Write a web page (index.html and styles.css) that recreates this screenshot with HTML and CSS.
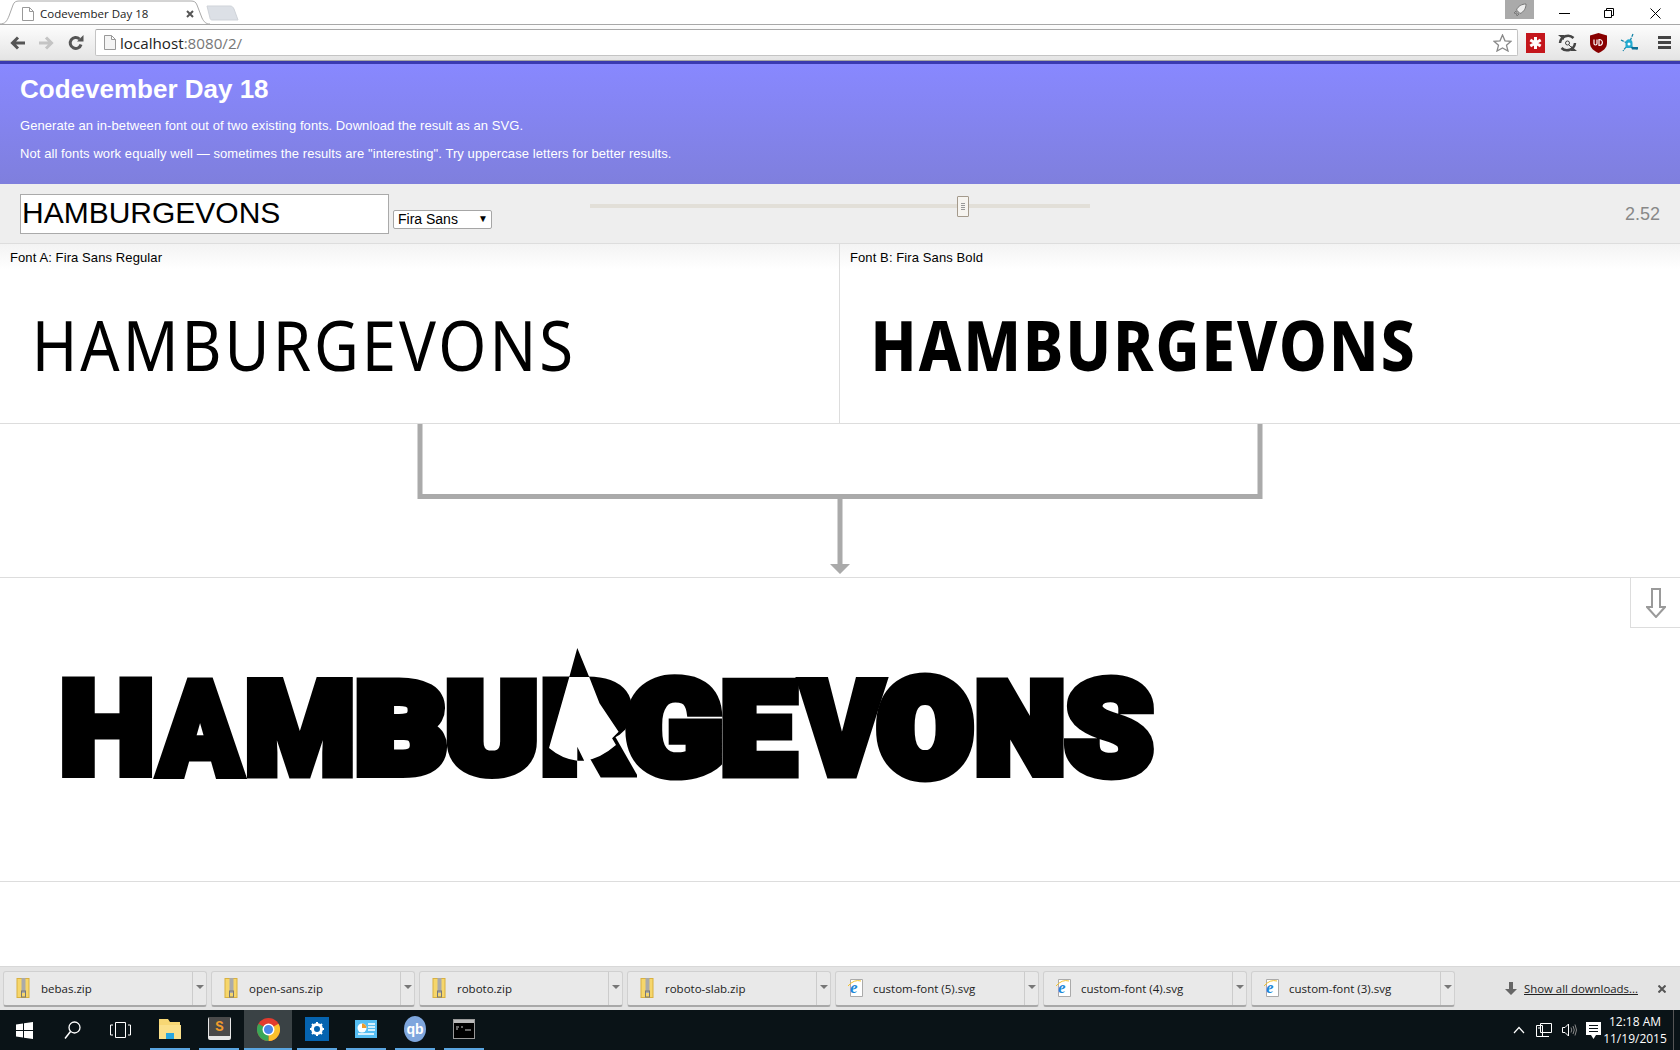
FILE: index.html
```html
<!DOCTYPE html>
<html lang="en">
<head>
<meta charset="utf-8">
<title>Codevember Day 18</title>
<link rel="stylesheet" href="styles.css">
</head>
<body>
<div class="tabstrip">
  <div class="tab">
    <svg class="tab-shape" width="210" height="25" viewBox="0 0 210 25"><path d="M0 24C5 24 7 21 9 16L13 5C14 2 16 1 19 1H191C194 1 196 2 197 5L202 18C204 22 206 24 210 24" fill="#fff" stroke="#a8a8a8"/></svg>
    <svg class="tab-fav" width="12" height="14" viewBox="0 0 12 14"><path d="M.5.5H7.500L11.500 4.500V13.500H.5ZM7.500.5V4.500H11.500" fill="#fff" stroke="#999"/></svg>
    <span class="tab-title">Codevember Day 18</span>
    <svg class="tab-close" width="8" height="8" viewBox="0 0 8 8"><path d="M1 1L7 7M7 1L1 7" stroke="#555" stroke-width="2"/></svg>
  </div>
  <svg class="newtab" width="33" height="16" viewBox="0 0 33 16"><path d="M1 1H24C26 1 27 2 28 4L32 15H6C5 15 4 14 4 13Z" fill="#dce0e6" stroke="#cfd3d9"/></svg>
  <div class="winbtns">
    <span class="profile"><svg width="14" height="14" viewBox="0 0 14 14"><path d="M13 1C9 1 5 3 3.500 7L7 10.500C11 9 13 5 13 1ZM3 8L1 10 3 10.500ZM6 11L4 13 3.500 11Z" fill="#eee" stroke="#777"/></svg></span>
    <svg class="win-min" width="11" height="2" viewBox="0 0 11 2"><rect width="11" height="1" fill="#000"/></svg>
    <svg class="win-max" width="10" height="10" viewBox="0 0 10 10"><path d="M.5 2.500H7.500V9.500H.5ZM2.500 2.500V.5H9.500V7.500H7.500" fill="none" stroke="#000"/></svg>
    <svg class="win-close" width="11" height="11" viewBox="0 0 11 11"><path d="M.5.5L10.500 10.500M10.500.5L.5 10.500" stroke="#000"/></svg>
  </div>
</div>
<div class="toolbar">
  <svg class="nav" width="15" height="14" viewBox="0 0 15 14"><path d="M15 7H3M8 1.500L2.500 7 8 12.500" fill="none" stroke="#555" stroke-width="3"/></svg>
  <svg class="nav" width="15" height="14" viewBox="0 0 15 14"><path d="M0 7H12M7 1.500L12.500 7 7 12.500" fill="none" stroke="#c4c4c4" stroke-width="3"/></svg>
  <svg class="nav" width="16" height="16" viewBox="0 0 16 16"><path d="M13 9.500A5.500 5.500 0 1 1 11.500 4" fill="none" stroke="#555" stroke-width="3"/><path d="M9 6.500H15.500V0Z" fill="#555"/></svg>
  <div class="omnibox">
    <svg class="omni-page" width="12" height="15" viewBox="0 0 12 15"><path d="M.5.5H7.500L11.500 4.500V14.500H.5ZM7.500.5V4.500H11.500" fill="#f4f4f4" stroke="#999"/></svg>
    <span class="url-host">localhost</span><span class="url-rest">:8080/2/</span>
    <svg class="star" width="19" height="18" viewBox="0 0 19 18"><path d="M9.500 1L12 6.800 18 7.300 13.500 11.300 15 17 9.500 14 4 17 5.500 11.300 1 7.300 7 6.800Z" fill="#fff" stroke="#888" stroke-width="1.300"/></svg>
  </div>
  <div class="ext">
    <svg width="19" height="20" viewBox="0 0 19 20"><rect width="19" height="20" fill="#c4161c"/><path d="M9.500 4V16M4.300 7L14.700 13M14.700 7L4.300 13" stroke="#fff" stroke-width="3"/></svg>
    <svg width="19" height="20" viewBox="0 0 19 20"><path d="M15.500 5A8 8 0 0 0 2 10M3.500 15A8 8 0 0 0 17 10" fill="none" stroke="#444" stroke-width="2.500"/><circle cx="9.500" cy="10" r="2" fill="none" stroke="#444"/><path d="M11 12L14 15" stroke="#444"/><path d="M0 2H6V7ZM19 18H13V13Z" fill="#444"/></svg>
    <svg width="17" height="20" viewBox="0 0 17 20"><path d="M8.500 0L17 2.500V10C17 15 13 18 8.500 20 4 18 0 15 0 10V2.500Z" fill="#800"/><path d="M4 6.500V10.500C4 12.500 7 12.500 7 10.500V6.500M9 6.500V12.500C13.500 12.500 13.500 6.500 9 6.500Z" fill="none" stroke="#fff" stroke-width="1.200"/></svg>
    <svg width="18" height="20" viewBox="0 0 18 20"><path d="M1 7L7 10M13 1L10 8M12 14L17 16M6 14L3 18" stroke="#0a7fa5" stroke-width="1.200" stroke-dasharray="3 1"/><path d="M5.500 15V10C5.500 5 12.500 5 12.500 10V15Z" fill="#22a9cf"/><circle cx="9" cy="11" r="1.500" fill="#fff"/><path d="M11 14H18V16.500H12Z" fill="#0a6f95"/></svg>
    <svg class="menu" width="13" height="13" viewBox="0 0 13 13"><path d="M0 0H13V3H0ZM0 5H13V8H0ZM0 10H13V13H0Z" fill="#444"/></svg>
  </div>
</div>
<header class="intro">
  <h1>Codevember Day 18</h1>
  <p>Generate an in-between font out of two existing fonts. Download the result as an SVG.</p>
  <p>Not all fonts work equally well — sometimes the results are "interesting". Try uppercase letters for better results.</p>
</header>
<section class="controls">
  <input class="word" type="text" value="HAMBURGEVONS">
  <div class="select-wrap"><select class="family"><option>Fira Sans</option></select></div>
  <input class="mix" type="range" min="0" max="100" value="75">
  <output class="mix-value">2.52</output>
</section>
<section class="fonts">
  <div class="font-col font-col-a">
    <div class="font-label">Font A: Fira Sans Regular</div>
    <div class="specimen specimen-a">HAMBURGEVONS</div>
  </div>
  <div class="font-col font-col-b">
    <div class="font-label">Font B: Fira Sans Bold</div>
    <div class="specimen specimen-b">HAMBURGEVONS</div>
  </div>
</section>
<div class="connector">
  <svg width="1680" height="153" viewBox="0 0 1680 153"><path d="M417.500 0H422.500V70H1257.500V0H1262.500V75H842.500V140H850L840 150 830 140H837.500V75H417.500Z" fill="#aaa"/></svg>
</div>
<section class="result">
  <button class="download" type="button" aria-label="Download"><svg width="20" height="30" viewBox="0 0 20 30"><path d="M6 1H14V19H19L10 29 1 19H6Z" fill="#fff" stroke="#9a9a9a" stroke-width="2"/></svg></button>
  <div class="morph"><span class="l lh">H</span><span class="l la">A</span><span class="l lm">M</span><span class="l lb">B</span><span class="l lu">U</span><span class="l lr">R</span><span class="l lg">G</span><span class="l le">E</span><span class="l lv">V</span><span class="l lo">O</span><span class="l ln">N</span><span class="l ls">S</span></div>
  <svg class="r-glitch" width="1680" height="304" viewBox="0 78 1680 304"><path d="M569.300 177H589.200L599.500 203.300 618.600 231.700 612.100 238.300 616 245Q600 259 584.200 260.700L593 278H577.300V260.700Q562 259 549 248Z" fill="#fff"/><path d="M577.300 148L569.300 177H589.200ZM577.300 246.700L584.200 260.700H577.300Z" fill="#000"/></svg>
</section>
<div class="blank"></div>
<div class="shelf">
  <div class="dl"><svg class="zip" width="13" height="20" viewBox="0 0 13 20"><rect x=".5" y=".5" width="12" height="19" fill="#f6d66b" stroke="#d8b040"/><rect x="5" y="0" width="4" height="15" fill="#aaa"/><rect x="5" y="13" width="4" height="6" fill="none" stroke="#777"/></svg><span class="dl-name">bebas.zip</span><span class="dl-caret"></span></div>
  <div class="dl"><svg class="zip" width="13" height="20" viewBox="0 0 13 20"><rect x=".5" y=".5" width="12" height="19" fill="#f6d66b" stroke="#d8b040"/><rect x="5" y="0" width="4" height="15" fill="#aaa"/><rect x="5" y="13" width="4" height="6" fill="none" stroke="#777"/></svg><span class="dl-name">open-sans.zip</span><span class="dl-caret"></span></div>
  <div class="dl"><svg class="zip" width="13" height="20" viewBox="0 0 13 20"><rect x=".5" y=".5" width="12" height="19" fill="#f6d66b" stroke="#d8b040"/><rect x="5" y="0" width="4" height="15" fill="#aaa"/><rect x="5" y="13" width="4" height="6" fill="none" stroke="#777"/></svg><span class="dl-name">roboto.zip</span><span class="dl-caret"></span></div>
  <div class="dl"><svg class="zip" width="13" height="20" viewBox="0 0 13 20"><rect x=".5" y=".5" width="12" height="19" fill="#f6d66b" stroke="#d8b040"/><rect x="5" y="0" width="4" height="15" fill="#aaa"/><rect x="5" y="13" width="4" height="6" fill="none" stroke="#777"/></svg><span class="dl-name">roboto-slab.zip</span><span class="dl-caret"></span></div>
  <div class="dl"><svg class="zip" width="16" height="20" viewBox="0 0 16 20"><path d="M3.500 1.500H15.500V18.500H3.500Z" fill="#fff" stroke="#aaa"/><path d="M1 8Q7 1 14 3" fill="none" stroke="#f2c230"/><text class="ie" x="3" y="15">e</text></svg><span class="dl-name">custom-font (5).svg</span><span class="dl-caret"></span></div>
  <div class="dl"><svg class="zip" width="16" height="20" viewBox="0 0 16 20"><path d="M3.500 1.500H15.500V18.500H3.500Z" fill="#fff" stroke="#aaa"/><path d="M1 8Q7 1 14 3" fill="none" stroke="#f2c230"/><text class="ie" x="3" y="15">e</text></svg><span class="dl-name">custom-font (4).svg</span><span class="dl-caret"></span></div>
  <div class="dl"><svg class="zip" width="16" height="20" viewBox="0 0 16 20"><path d="M3.500 1.500H15.500V18.500H3.500Z" fill="#fff" stroke="#aaa"/><path d="M1 8Q7 1 14 3" fill="none" stroke="#f2c230"/><text class="ie" x="3" y="15">e</text></svg><span class="dl-name">custom-font (3).svg</span><span class="dl-caret"></span></div>
  <svg class="show-arrow" width="12" height="13" viewBox="0 0 12 13"><path d="M4 0H8V7H12L6 13 0 7H4Z" fill="#666"/></svg>
  <a class="show-all">Show all downloads...</a>
  <svg class="shelf-x" width="8" height="8" viewBox="0 0 8 8"><path d="M.5.5L7.500 7.500M7.500.5L.5 7.500" stroke="#555" stroke-width="2"/></svg>
</div>
<footer class="taskbar">
  <span class="tb tb-start"><svg width="17" height="17" viewBox="0 0 17 17"><path d="M0 2.500L7 1.500V8H0ZM8 1.300L17 0V8H8ZM0 9H7V15.500L0 14.500ZM8 9H17V17L8 15.700Z" fill="#fff"/></svg></span>
  <span class="tb tb-plain"><svg width="17" height="19" viewBox="0 0 17 19"><circle cx="10.500" cy="6.500" r="5.500" fill="none" stroke="#fff" stroke-width="1.300"/><path d="M6.500 10.500L1 17.500" stroke="#fff" stroke-width="1.500"/></svg></span>
  <span class="tb tb-plain"><svg width="21" height="16" viewBox="0 0 21 16"><path d="M5.500.5H15.500V15.500H5.500ZM3 3H.5V13H3M18 3H20.500V13H18" fill="none" stroke="#fff"/></svg></span>
  <span class="tb tb-app"><svg width="22" height="20" viewBox="0 0 22 20"><path d="M0 0H9L11 3H21V20H0Z" fill="#f7d774"/><rect y="6" width="22" height="14" fill="#fbe08a"/><path d="M7 20V14H15V20H13V16H9V20Z" fill="#2aa7e0"/><rect x="8" y="15" width="6" height="5" fill="#2aa7e0"/></svg></span>
  <span class="tb tb-app"><svg width="23" height="24" viewBox="0 0 23 24"><rect width="23" height="23" rx="2" fill="#e8e8e8"/><rect x="1" y="0" width="21" height="19" fill="#4a4a4a"/><text class="sub" x="11.500" y="14">S</text></svg></span>
  <span class="tb tb-chrome"><svg width="23" height="23" viewBox="0 0 24 24"><circle cx="12" cy="12" r="12" fill="#e33b2e"/><path d="M12 12L22.400 6A12 12 0 0 1 12 24Z" fill="#fbc02d"/><path d="M12 12L12 24A12 12 0 0 1 1.600 6Z" fill="#3aa757"/><circle cx="12" cy="12" r="5.500" fill="#4a86e8" stroke="#fff" stroke-width="1.500"/></svg></span>
  <span class="tb tb-app"><svg width="24" height="24" viewBox="0 0 24 24"><rect width="24" height="24" fill="#0563af"/><circle cx="12" cy="12" r="4.500" fill="none" stroke="#fff" stroke-width="3"/><path d="M12 5V7M12 17V19M5 12H7M17 12H19M7 7L8.500 8.500M15.500 15.500L17 17M17 7L15.500 8.500M8.500 15.500L7 17" stroke="#fff" stroke-width="2"/></svg></span>
  <span class="tb tb-app"><svg width="22" height="18" viewBox="0 0 22 18"><rect width="22" height="18" fill="#55bdf2"/><circle cx="7" cy="8" r="4.500" fill="#fff"/><path d="M7 8V3.500A4.500 4.500 0 0 1 11.500 8Z" fill="#f29c2b"/><path d="M13 4H20M13 7H20M13 10H20M3 14H19" stroke="#fff" stroke-width="1.500"/></svg></span>
  <span class="tb tb-app"><svg width="22" height="26" viewBox="0 0 22 26"><ellipse cx="11" cy="13" rx="11" ry="13" fill="#7ea6dd"/><text class="qb" x="11" y="18">qb</text></svg></span>
  <span class="tb tb-app"><svg width="22" height="20" viewBox="0 0 22 20"><rect x=".5" y=".5" width="21" height="19" fill="#000" stroke="#999"/><rect x="1" y="1" width="20" height="3" fill="#bbb"/><path d="M3 8H6M3 10H5M8 8H10M12 11H18" stroke="#ccc"/></svg></span>
  <div class="tray">
    <svg width="12" height="8" viewBox="0 0 12 8"><path d="M1 7L6 1.500 11 7" fill="none" stroke="#fff" stroke-width="1.200"/></svg>
    <svg class="tray-net" width="16" height="15" viewBox="0 0 16 15"><path d="M4.500.5H15.500V9.500H4.500ZM.5 2.500H6.500V13.500H.5ZM2 5H5" fill="#0a1317" stroke="#fff"/><path d="M6 13.500H13" stroke="#fff"/></svg>
    <svg class="tray-snd" width="15" height="14" viewBox="0 0 15 14"><path d="M.5 4.500H3L6.500 1V13L3 9.500H.5Z" fill="none" stroke="#fff"/><path d="M9 4.500Q10.500 7 9 9.500M11 3Q13.500 7 11 11M13 1.500Q16 7 13 12.500" fill="none" stroke="#888"/></svg>
    <svg class="tray-note" width="15" height="17" viewBox="0 0 15 17"><path d="M0 0H15V13H10L7.500 17 5 13H0Z" fill="#fff"/><path d="M3 3.500H12M3 6.500H12M3 9.500H12" stroke="#0a1317"/></svg>
    <div class="clock"><span>12:18 AM</span><span>11/19/2015</span></div>
    <span class="show-desktop"></span>
  </div>
</footer>
</body>
</html>
```

FILE: styles.css
```css
* { box-sizing: border-box; }
html, body { margin: 0; height: 100%; }
body {
  display: flex;
  flex-direction: column;
  height: 1050px;
  overflow: hidden;
  background: #fff;
  font-family: "Liberation Sans", Arial, sans-serif;
  color: #000;
}

/* Browser chrome */
.tabstrip {
  display: flex;
  height: 25px;
  flex: none;
  background: #fff;
  border-bottom: 1px solid #a8a8a8;
  font-family: "Open Sans", sans-serif;
}
.tab {
  position: relative;
  display: flex;
  align-items: center;
  width: 210px;
  height: 25px;
  padding: 2px 0 0 22px;
  margin-bottom: -1px;
}
.tab-shape { position: absolute; left: 0; top: 0; }
.tab-fav, .tab-title, .tab-close { position: relative; }
.tab-title { margin-left: 6px; font-size: 11.500px; width: 143px; color: #222; white-space: nowrap; }
.tab-close { margin-left: 3px; }
.newtab { margin: 5px 0 0 -4px; }
.winbtns { display: flex; align-items: flex-start; margin-left: auto; padding-right: 19px; }
.profile {
  display: flex;
  align-items: center;
  justify-content: center;
  width: 29px;
  height: 19px;
  background: #aaa;
}
.win-min { margin: 13px 0 0 25px; }
.win-max { margin: 8px 0 0 34px; }
.win-close { margin: 8px 0 0 36px; }

.toolbar {
  display: flex;
  align-items: center;
  flex: none;
  height: 36px;
  padding: 0 9px 0 10px;
  background: linear-gradient(#fdfdfd, #e4e4e4);
  border-bottom: 1px solid #a5a5a5;
}
.nav { margin-right: 14px; }
.omnibox {
  display: flex;
  align-items: center;
  width: 1423px;
  height: 27px;
  margin-left: -3px;
  padding: 0 5px 0 8px;
  background: #fff;
  border: 1px solid #c4c4c4;
  border-top-color: #a8a8a8;
  border-radius: 2px;
  font-family: "Open Sans", sans-serif;
  font-size: 15.200px;
}
.omni-page { margin-right: 4px; }
.url-host { color: #222; }
.url-rest { color: #777; }
.star { margin-left: auto; }
.ext { display: flex; align-items: center; gap: 13px; margin-left: 8px; flex: 1; }
.menu { margin-left: auto; }

/* Intro */
.intro {
  flex: none;
  height: 123px;
  padding: 11px 20px 0;
  border-top: 3px solid #3a3ab0;
  background: linear-gradient(#8888ff, #7f7fdd);
  color: #fff;
}
.intro h1 { margin: 0 0 15px; font-size: 26px; line-height: 28px; font-weight: 700; }
.intro p { margin: 0 0 12px; font-size: 13px; line-height: 16px; letter-spacing: .08px; }

/* Controls */
.controls {
  display: flex;
  align-items: flex-start;
  flex: none;
  height: 60px;
  padding: 10px 20px 0;
  background: #eee;
  border-bottom: 1px solid #ddd;
}
.word {
  width: 369px;
  height: 40px;
  padding: 0 1px 2px;
  border: 1px solid #aaa;
  background: #fff;
  font-family: "Liberation Sans", Arial, sans-serif;
  font-size: 30px;
  color: #000;
  outline: none;
}
.select-wrap { position: relative; margin: 16px 0 0 4px; }
.select-wrap::after {
  content: "▼";
  position: absolute;
  right: 4px;
  top: 3px;
  font-size: 10px;
  color: #000;
}
.family {
  display: block;
  width: 99px;
  height: 19px;
  padding: 0 0 1px 4px;
  appearance: none;
  -webkit-appearance: none;
  border: 1px solid #a6a6a6;
  border-radius: 2px;
  background: #fff;
  font-family: "Liberation Sans", Arial, sans-serif;
  font-size: 14px;
  color: #000;
}
.mix {
  width: 500px;
  height: 21px;
  margin: 1px 0 0 98px;
  appearance: none;
  -webkit-appearance: none;
  background: transparent;
}
.mix::-webkit-slider-runnable-track { height: 4px; background: #e2dfd8; }
.mix::-webkit-slider-thumb {
  -webkit-appearance: none;
  width: 12px;
  height: 21px;
  margin-top: -8px;
  transform: translateX(1px);
  background: repeating-linear-gradient(#999 0 1px, #f6f4f0 1px 2px) center / 4px 7px no-repeat #f6f4f0;
  border: 1px solid #a49a8c;
  border-radius: 1px;
}
.mix-value { margin: 10px 0 0 auto; font-size: 18px; line-height: 20px; color: #888; }

/* Font specimens */
.fonts { display: flex; flex: none; height: 180px; border-bottom: 1px solid #ddd; }
.font-col { width: 50%; overflow: hidden; }
.font-col-a { border-right: 1px solid #ddd; }
.font-label {
  height: 25px;
  padding: 6px 10px 0;
  background: linear-gradient(#f3f3f3, #fff);
  font-size: 13px;
  line-height: 15px;
  letter-spacing: .1px;
}
.specimen {
  font-size: 70px;
  line-height: 70px;
  white-space: nowrap;
  font-family: "Noto Sans", sans-serif;
  padding-top: 40px;
}
.specimen-a {
  padding-left: 31px;
  font-weight: 400;
  letter-spacing: 3.400px;
  transform: scaleX(.88);
  transform-origin: 37px 0;
}
.specimen-b {
  padding-left: 30px;
  font-weight: 800;
  letter-spacing: 2.500px;
  transform: scaleX(.86);
  transform-origin: 34px 0;
}

.connector { flex: none; height: 154px; border-bottom: 1px solid #ddd; }
.connector svg { display: block; }

/* Result */
.result { position: relative; flex: none; height: 304px; border-bottom: 1px solid #ddd; overflow: hidden; }
.download {
  position: absolute;
  right: 0;
  top: 0;
  display: flex;
  align-items: center;
  justify-content: center;
  width: 50px;
  height: 50px;
  padding: 0;
  background: #fff;
  border: 1px solid #ddd;
  border-width: 0 0 1px 1px;
}
.morph {
  display: flex;
  padding-top: 72px;
  height: 230px;
  font-family: Roboto, sans-serif;
  font-weight: 900;
  font-size: 129px;
  line-height: 160px;
  -webkit-text-stroke: 9px #000;
}
.l { display: flex; justify-content: center; width: 0; }
.lh { margin-left: 106.500px; transform: scaleX(1.05); }
.la { margin-left: 93px; transform: scaleX(.93); }
.lm { margin-left: 100.500px; transform: scaleX(.98); }
.lb { margin-left: 101px; transform: scaleX(1.12); font-size: 125px; -webkit-text-stroke-width: 12px; }
.lu { margin-left: 91px; transform: scaleX(1.1); font-size: 125px; -webkit-text-stroke-width: 12px; }
.lr { margin-left: 95px; transform: scaleX(1.12); }
.lg { margin-left: 87px; transform: scaleX(1.1); -webkit-text-stroke-width: 11px; }
.le { margin-left: 84px; transform: scaleX(1.05); font-size: 126px; -webkit-text-stroke-width: 11px; }
.lv { margin-left: 84px; transform: scaleX(.95); }
.lo { margin-left: 83px; transform: scaleX(1.03); -webkit-text-stroke-width: 15px; }
.ln { margin-left: 95px; transform: scaleX(1.01); font-size: 125px; -webkit-text-stroke-width: 12px; }
.ls { margin-left: 89px; transform: scaleX(1.08); -webkit-text-stroke-width: 11px; }
.r-glitch { position: absolute; left: 0; top: 0; }

.blank { flex: 1; }

/* Download shelf */
.shelf {
  display: flex;
  align-items: center;
  flex: none;
  height: 44px;
  padding: 0 0 0 3px;
  background: #e4e4e4;
  border-top: 1px solid #d8d8d8;
  font-family: "Open Sans", sans-serif;
  font-size: 11.500px;
  color: #222;
}
.dl {
  display: flex;
  align-items: center;
  width: 204px;
  height: 36px;
  margin-right: 4px;
  padding-left: 11px;
  background: #e9e9e9;
  border: 1px solid #d0d0d0;
  border-bottom: 2px solid #a8a8a8;
  border-radius: 3px;
}
.zip { flex: none; width: 16px; overflow: visible; }
.dl-name { margin-left: 10px; white-space: nowrap; }
.dl-caret {
  position: relative;
  flex: none;
  align-self: stretch;
  width: 14px;
  margin-left: auto;
  border-left: 1px solid #ccc;
}
.dl-caret::after {
  content: "";
  position: absolute;
  left: 3px;
  top: 13px;
  border: 4px solid transparent;
  border-top: 4px solid #777;
}
.ie { font-family: "Liberation Serif", serif; font-size: 17px; font-style: italic; font-weight: 700; fill: #1e88d8; }
.show-arrow { margin-left: 46px; }
.show-all { margin-left: 7px; font-size: 11.400px; text-decoration: underline; white-space: nowrap; }
.shelf-x { margin-left: 20px; }

/* Taskbar */
.taskbar {
  display: flex;
  flex: none;
  height: 40px;
  background: #0a1317;
  color: #fff;
  font-family: "Open Sans", sans-serif;
  font-size: 12px;
}
.tb {
  display: flex;
  align-items: center;
  justify-content: center;
  flex: none;
  height: 40px;
}
.tb-start { width: 48px; }
.tb-plain { width: 48px; }
.tb-plain + .tb-plain { margin-right: 1.500px; }
.tb-app, .tb-chrome { width: 40px; margin: 0 4.500px; border-bottom: 2px solid #5aa5e0; }
.tb-chrome { width: 48px; margin: 0 .5px; background: #3a4245; }
.sub { font-family: "Liberation Mono", monospace; font-size: 14px; font-weight: 700; fill: #f29c2b; text-anchor: middle; }
.qb { font-family: "Liberation Sans", sans-serif; font-size: 14px; font-weight: 700; fill: #fff; text-anchor: middle; }
.tray { display: flex; align-items: center; margin-left: auto; }
.tray-net { margin-left: 11px; }
.tray-snd { margin-left: 10px; }
.tray-note { margin-left: 9px; }
.clock { display: flex; flex-direction: column; align-items: center; width: 68px; line-height: 17px; }
.show-desktop { width: 1px; height: 40px; margin-left: 4px; background: #555; margin-right: 6px; }
```
